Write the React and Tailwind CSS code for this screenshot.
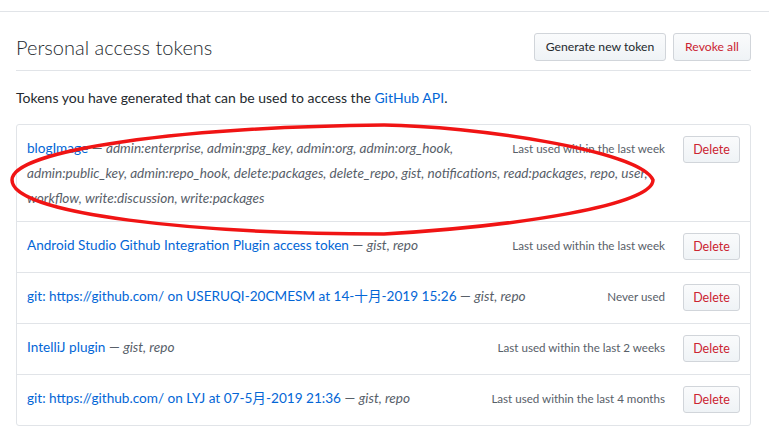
import React from 'react'

const tokens = [
  {
    name: 'blogImage',
    scopes: 'admin:enterprise, admin:gpg_key, admin:org, admin:org_hook, admin:public_key, admin:repo_hook, delete:packages, delete_repo, gist, notifications, read:packages, repo, user, workflow, write:discussion, write:packages',
    used: 'Last used within the last week',
  },
  { name: 'Android Studio Github Integration Plugin access token', scopes: 'gist, repo', used: 'Last used within the last week' },
  { name: 'git: https://github.com/ on USERUQI-20CMESM at 14-十月-2019 15:26', scopes: 'gist, repo', used: 'Never used' },
  { name: 'IntelliJ plugin', scopes: 'gist, repo', used: 'Last used within the last 2 weeks' },
  { name: 'git: https://github.com/ on LYJ at 07-5月-2019 21:36', scopes: 'gist, repo', used: 'Last used within the last 4 months' },
]

function Btn({ children, danger, className = '' }) {
  return (
    <button
      className={`rounded-[3px] border border-[#d1d5da] bg-gradient-to-b from-[#fafbfc] to-[#eff3f6] ${danger ? 'text-[#cb2431]' : 'text-[#24292e]'} ${className}`}
    >
      {children}
    </button>
  )
}

export default function App() {
  return (
    <div className="relative w-[769px] h-[435px] bg-white overflow-hidden text-[#24292e] font-['Lato','Noto_Sans_CJK_SC',sans-serif]">
      <div className="mt-[11px] border-t border-[#e1e4e8] pl-4 pr-[18px]">
        <div className="flex items-center justify-between pt-[21px] pb-[9px] border-b border-[#e1e4e8]">
          <h2 className="text-[20px] font-light leading-[28px]">Personal access tokens</h2>
          <div className="flex gap-[7px]">
            <Btn className="h-[28px] w-[132px] text-[12.2px]">Generate new token</Btn>
            <Btn danger className="h-[28px] w-[78px] text-[12.2px]">Revoke all</Btn>
          </div>
        </div>

        <p className="mt-4 text-[14px] leading-[21px]">
          Tokens you have generated that can be used to access the <a className="text-[#0366d6]">GitHub API</a>.
        </p>

        <div className="mt-4 border border-[#e1e4e8] rounded-[3px]">
          {tokens.map((t, i) => (
            <div key={i} className={`px-[10px] pt-[11px] pb-[10px] text-[13.6px] leading-[25px] flow-root ${i > 0 ? 'border-t border-[#e1e4e8]' : ''}`}>
              <Btn danger className="float-right h-[27px] w-[57px] mb-[2px] text-[12.5px] leading-[25px]">Delete</Btn>
              <span className="float-right mr-[18px] text-[11.6px] leading-[25px] text-[#586069]">{t.used}</span>
              <a className="text-[#0366d6]">{t.name}</a>
              <span className="text-[#586069]"> — <em>{t.scopes}</em></span>
            </div>
          ))}
        </div>
      </div>

      <svg className="absolute inset-0 pointer-events-none" width="769" height="435" viewBox="0 0 769 435">
        <path
          d="M12,180 C12,150 180,127 384,125 C470,126 640,150 653,180 C653,205 520,226 384,234 C200,234 12,215 12,180 Z"
          fill="none"
          stroke="#f01414"
          strokeWidth="3.5"
        />
      </svg>
    </div>
  )
}
